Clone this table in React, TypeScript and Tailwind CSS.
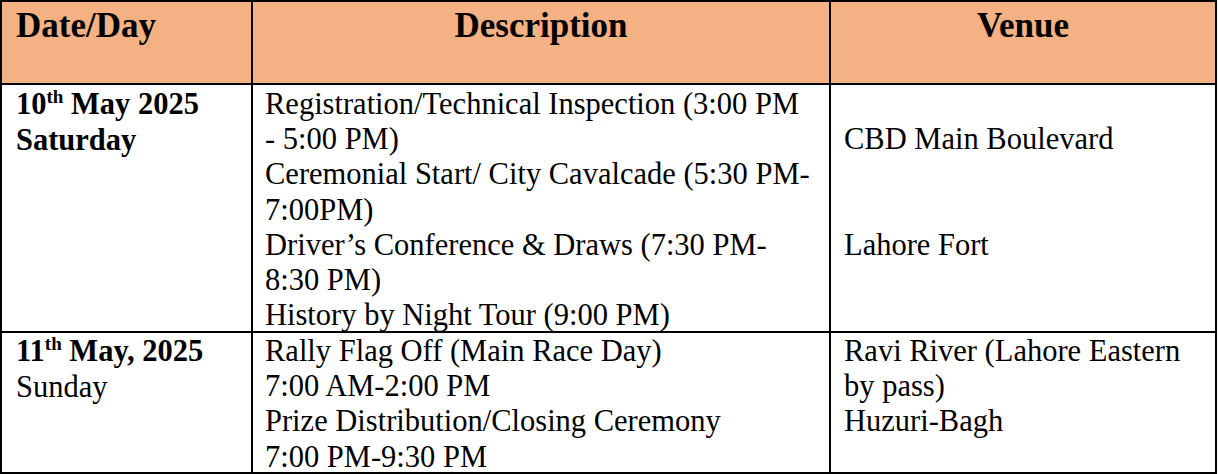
import React from 'react'

const serif = { fontFamily: '"Liberation Serif", "Times New Roman", serif' }

function Sup({ children }: { children: React.ReactNode }) {
  return <sup className="text-[19px] leading-none align-[0.6em] top-0">{children}</sup>
}

export default function App() {
  return (
    <div className="bg-white w-[1219px] h-[474px] text-black" style={serif}>
      <div className="w-[1217px] border-2 border-black">
        {/* Header */}
        <div className="grid grid-cols-[251px_578px_384px] h-[83px] bg-[#F4B183] border-b-2 border-black">
          <div className="border-r-2 border-black pl-[14px] pt-[4px] text-[35px] font-bold leading-[40px]">
            Date/Day
          </div>
          <div className="border-r-2 border-black pt-[4px] text-center text-[35px] font-bold leading-[40px]">
            Description
          </div>
          <div className="pt-[4px] text-center text-[35px] font-bold leading-[40px]">Venue</div>
        </div>

        {/* Row 1 */}
        <div className="grid grid-cols-[251px_578px_384px] h-[248px] border-b-2 border-black text-[30.5px] leading-[35.2px]">
          <div className="border-r-2 border-black pl-[14px] pt-[2px] font-bold whitespace-nowrap">
            <div>
              10<Sup>th</Sup> May 2025
            </div>
            <div>Saturday</div>
          </div>
          <div className="border-r-2 border-black pl-[12px] pt-[2px] whitespace-nowrap">
            <div>Registration/Technical Inspection (3:00 PM</div>
            <div>- 5:00 PM)</div>
            <div>Ceremonial Start/ City Cavalcade (5:30 PM-</div>
            <div>7:00PM)</div>
            <div>Driver’s Conference &amp; Draws (7:30 PM-</div>
            <div>8:30 PM)</div>
            <div>History by Night Tour (9:00 PM)</div>
          </div>
          <div className="pl-[13px] pt-[2px] whitespace-nowrap">
            <div>&nbsp;</div>
            <div>CBD Main Boulevard</div>
            <div>&nbsp;</div>
            <div>&nbsp;</div>
            <div>Lahore Fort</div>
          </div>
        </div>

        {/* Row 2 */}
        <div className="grid grid-cols-[251px_578px_384px] h-[139px] text-[30.5px] leading-[35.2px]">
          <div className="border-r-2 border-black pl-[14px] pt-[1px] whitespace-nowrap">
            <div className="font-bold">
              11<Sup>th</Sup> May, 2025
            </div>
            <div>Sunday</div>
          </div>
          <div className="border-r-2 border-black pl-[12px] pt-[1px] whitespace-nowrap">
            <div>Rally Flag Off (Main Race Day)</div>
            <div>7:00 AM-2:00 PM</div>
            <div>Prize Distribution/Closing Ceremony</div>
            <div>7:00 PM-9:30 PM</div>
          </div>
          <div className="pl-[13px] pt-[1px] whitespace-nowrap">
            <div>Ravi River (Lahore Eastern</div>
            <div>by pass)</div>
            <div>Huzuri-Bagh</div>
          </div>
        </div>
      </div>
    </div>
  )
}
